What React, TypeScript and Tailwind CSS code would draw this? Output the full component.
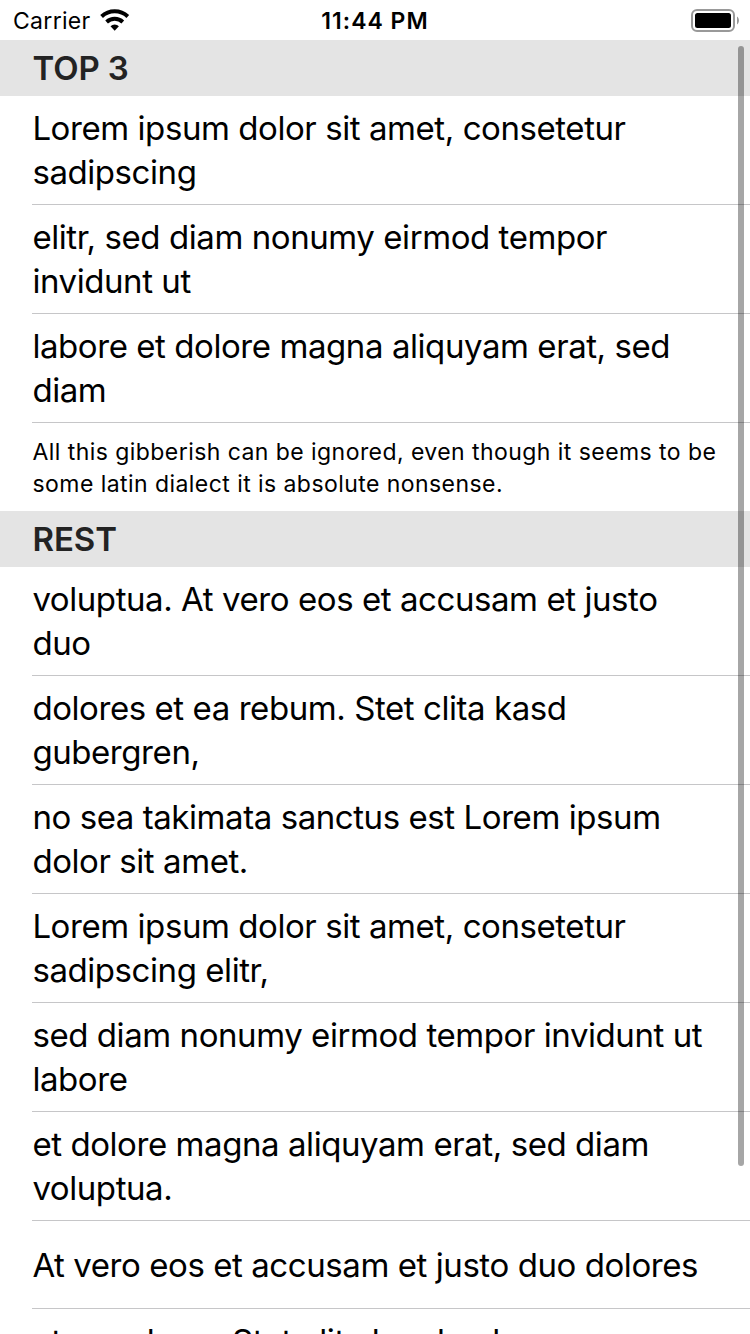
type Item = string[];

const top: Item[] = [
  ["Lorem ipsum dolor sit amet, consetetur", "sadipscing"],
  ["elitr, sed diam nonumy eirmod tempor", "invidunt ut"],
  ["labore et dolore magna aliquyam erat, sed", "diam"],
];

const rest: Item[] = [
  ["voluptua. At vero eos et accusam et justo", "duo"],
  ["dolores et ea rebum. Stet clita kasd", "gubergren,"],
  ["no sea takimata sanctus est Lorem ipsum", "dolor sit amet."],
  ["Lorem ipsum dolor sit amet, consetetur", "sadipscing elitr,"],
  ["sed diam nonumy eirmod tempor invidunt ut", "labore"],
  ["et dolore magna aliquyam erat, sed diam", "voluptua."],
  ["At vero eos et accusam et justo duo dolores"],
];

function Row({ lines, alignTop = false }: { lines: Item; alignTop?: boolean }) {
  return (
    <li
      className={`ml-8 flex min-h-[88px] flex-col border-b border-[#c6c6c8] py-[10px] pl-[0.4px] text-[33px] leading-[44px] tracking-[-0.43px] whitespace-nowrap ${
        alignTop ? "justify-start" : "justify-center"
      }`}
    >
      {lines.map((line) => (
        <span key={line}>{line}</span>
      ))}
    </li>
  );
}

function Header({ children }: { children: string }) {
  return (
    <h2 className="h-14 bg-[#e4e4e4] pl-[32.5px] text-[33px] leading-[56px] font-semibold tracking-[-0.1px] text-[#232323]">
      {children}
    </h2>
  );
}

function StatusBar() {
  return (
    <header className="relative flex h-10 items-center justify-between pr-[11px] pl-[13px]">
      <div className="flex items-center gap-[9px]">
        <span className="w-[78px] pt-[2px] text-[23px] leading-[38px] tracking-[0.3px]">Carrier</span>
        <svg width="30" height="22" viewBox="0 0 30 22" fill="none" stroke="#000">
          <path d="M1.6 7.4 A19.4 19.4 0 0 1 27.8 7.4" strokeWidth="4" />
          <path d="M6.6 12.9 A12 12 0 0 1 22.8 12.9" strokeWidth="4" />
          <path d="M14.7 21.7 L10.5 17.3 A6 6 0 0 1 18.9 17.3 Z" fill="#000" stroke="none" />
        </svg>
      </div>
      <span className="absolute inset-x-0 top-0 pt-[2px] text-center text-[23px] leading-[38px] font-[570] tracking-[1px]">
        11:44 PM
      </span>
      <svg width="48" height="23" viewBox="0 0 48 23">
        <rect x="1" y="1" width="42" height="21" rx="5" fill="none" stroke="#999" strokeWidth="2" />
        <rect x="4" y="4" width="36" height="15" rx="2.5" fill="#000" />
        <path d="M46 7.5 C48.6 9 48.6 14 46 15.5 Z" fill="#999" />
      </svg>
    </header>
  );
}

export default function App() {
  return (
    <div className="relative h-[1334px] w-[750px] overflow-hidden bg-white font-['Inter',sans-serif] text-black">
      <StatusBar />
      <Header>TOP 3</Header>
      <ul>
        {top.map((lines) => (
          <Row key={lines[0]} lines={lines} />
        ))}
      </ul>
      <p className="h-[88px] pt-[13px] pl-[32.5px] text-[23px] leading-8 tracking-[0.44px] whitespace-nowrap">
        All this gibberish can be ignored, even though it seems to be
        <br />
        some latin dialect it is absolute nonsense.
      </p>
      <Header>REST</Header>
      <ul>
        {rest.map((lines) => (
          <Row key={lines[0]} lines={lines} />
        ))}
        <Row lines={["et ea rebum. Stet clita kasd gubergren,"]} alignTop />
      </ul>
      <div className="absolute top-[46px] right-[6px] h-[1120px] w-[6px] rounded-full bg-black/35" />
    </div>
  );
}
